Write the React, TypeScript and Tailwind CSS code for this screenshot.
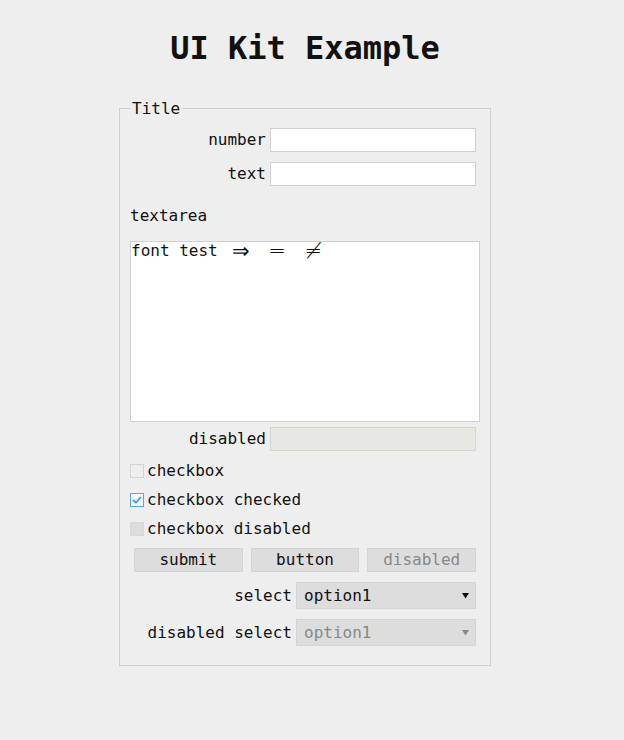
const mono = "font-['DejaVu_Sans_Mono','Liberation_Mono',monospace]";

const Lig = ({ children }: { children: string }) => (
  <span className="inline-block w-[2ch] text-center align-top font-['DejaVu_Sans',sans-serif] text-[21px] font-light leading-[18px]">
    {children}
  </span>
);

const Check = ({ checked, disabled }: { checked?: boolean; disabled?: boolean }) => (
  <span
    className={
      "flex h-[14px] w-[14px] items-center justify-center border " +
      (checked
        ? "border-[#5aa7f0] bg-[#f4f8fc]"
        : disabled
          ? "border-[#d8d8d8] bg-[#dcdcdc]"
          : "border-[#d4d4d4] bg-[#eeeeee]")
    }
  >
    {checked && (
      <svg width="10" height="8" viewBox="0 0 10 8">
        <path d="M1 4 L4 6.5 L9 1" fill="none" stroke="#3d95ea" strokeWidth="1.8" />
      </svg>
    )}
  </span>
);

const Arrow = ({ color }: { color: string }) => (
  <svg width="7" height="7" viewBox="0 0 7 7">
    <path d="M0 1 H7 L3.5 6.5 Z" fill={color} />
  </svg>
);

export default function App() {
  return (
    <div className={`min-h-[740px] bg-[#eeeeee] pr-[14px] text-[16px] text-[#111111] ${mono}`}>
      <h1 className="pt-[26px] text-center text-[32px] font-bold leading-[44px]">UI Kit Example</h1>
      <div className="flex justify-center pt-[26px]">
        <fieldset className="w-[372px] border border-[#cfcfcf] px-[10px] pb-[19px]">
          <legend className="px-[2px] pt-[2px] leading-[22px]">Title</legend>
          <div className="flex flex-col">
            <div className="mt-[8px] flex items-center justify-end pr-[4px]">
              <span className="mr-[4px]">number</span>
              <div className="h-[24px] w-[206px] border border-[#d0d0d0] bg-white" />
            </div>
            <div className="mt-[10px] flex items-center justify-end pr-[4px]">
              <span className="mr-[4px]">text</span>
              <div className="h-[24px] w-[206px] border border-[#d0d0d0] bg-white" />
            </div>
            <div className="mt-[18px] leading-[24px]">textarea</div>
            <div className="mt-[13px] h-[181px] w-[350px] border border-[#d0d0d0] bg-white leading-[18px]">
              font test <Lig>⇒</Lig> <Lig>=</Lig> <Lig>≠</Lig>
            </div>
            <div className="mt-[5px] flex items-center justify-end pr-[4px]">
              <span className="mr-[4px]">disabled</span>
              <div className="h-[24px] w-[206px] border border-[#d4d4d0] bg-[#e8e8e2]" />
            </div>
            <label className="mt-[8px] flex h-[24px] items-center gap-[3px]">
              <Check />
              <span>checkbox</span>
            </label>
            <label className="mt-[5px] flex h-[24px] items-center gap-[3px]">
              <Check checked />
              <span>checkbox checked</span>
            </label>
            <label className="mt-[5px] flex h-[24px] items-center gap-[3px]">
              <Check disabled />
              <span>checkbox disabled</span>
            </label>
            <div className="mt-[7px] flex gap-[8px] px-[4px]">
              <button className="h-[24px] flex-1 border border-[#d4d4d4] bg-[#dddddd] leading-none">submit</button>
              <button className="h-[24px] flex-1 border border-[#d4d4d4] bg-[#dddddd] leading-none">button</button>
              <button className="h-[24px] flex-1 border border-[#d4d4d4] bg-[#dddddd] leading-none text-[#888888]">disabled</button>
            </div>
            <div className="mt-[10px] flex items-center justify-end pr-[4px]">
              <span className="mr-[4px]">select</span>
              <div className="flex h-[27px] w-[180px] items-center justify-between border border-[#d4d4d4] bg-[#dddddd] pl-[7px] pr-[6px]">
                <span>option1</span>
                <Arrow color="#111111" />
              </div>
            </div>
            <div className="mt-[10px] flex items-center justify-end pr-[4px]">
              <span className="mr-[4px]">disabled select</span>
              <div className="flex h-[27px] w-[180px] items-center justify-between border border-[#d4d4d4] bg-[#dddddd] pl-[7px] pr-[6px] text-[#888888]">
                <span>option1</span>
                <Arrow color="#888888" />
              </div>
            </div>
          </div>
        </fieldset>
      </div>
    </div>
  );
}
